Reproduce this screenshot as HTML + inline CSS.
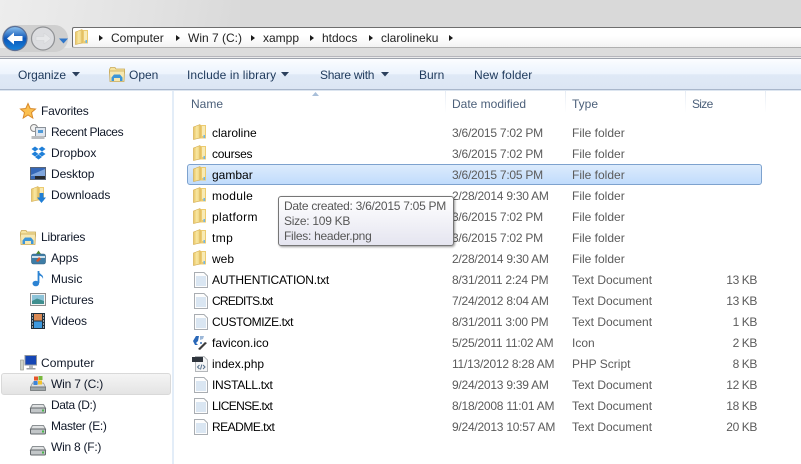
<!DOCTYPE html>
<html><head><meta charset="utf-8"><style>
html,body{margin:0;padding:0}
body{width:801px;height:464px;position:relative;overflow:hidden;background:#fff;font:12px/16px "Liberation Sans",sans-serif;color:#000}
.a{position:absolute}
.t{position:absolute;white-space:nowrap;height:16px}
.s{color:#101828}
.g{color:#5b5b5b}
.d{letter-spacing:-.24px}
.h{color:#4c607a}
.b{color:#1e395b}
.r{text-align:right;width:60px;left:697px;letter-spacing:-.4px}
.tt{color:#575757;letter-spacing:-.27px}
svg{position:absolute;overflow:visible}
</style></head><body>
<svg width="0" height="0" style="left:0;top:0">
<defs>
<linearGradient id="fg" x1="0" x2="1" y1="0" y2="0"><stop offset="0" stop-color="#e9c462"/><stop offset=".5" stop-color="#f8e7a2"/><stop offset="1" stop-color="#edcf78"/></linearGradient>
<linearGradient id="bl" x1="0" x2="0" y1="0" y2="1"><stop offset="0" stop-color="#8fc4f0"/><stop offset=".5" stop-color="#0d56b8"/><stop offset="1" stop-color="#1583dc"/></linearGradient>
<symbol id="folder" viewBox="0 0 14 16" overflow="visible">
<path d="M6 1H13V14.500H6Z" fill="#eccb70"/>
<path d="M9 2H12V12H9Z" fill="#f8eab4"/>
<path d="M.5 3 7 .5V14L.5 15.500Z" fill="url(#fg)" stroke="#d0a747" stroke-width=".6"/>
<rect x="10.500" y="11" width="1.500" height="3" fill="#6fb7e8"/>
</symbol>
<symbol id="doc" viewBox="0 0 14 16" overflow="visible">
<path d="M.5.5H10L13.500 4V15.500H.5Z" fill="#fdfdfd" stroke="#a9adb2"/>
<path d="M2 5H12M2 7H12M2 9H12M2 11H12M2 13H12" stroke="#b8cfe6"/>
</symbol>
<symbol id="drive" viewBox="0 0 16 12" overflow="visible">
<path d="M2.500 2.500H13.500L15.500 6H.500Z" fill="#dfe1e2" stroke="#8c9194"/>
<rect x=".5" y="6" width="15" height="5" rx="1" fill="#c2c6c8" stroke="#63686b"/>
<rect x="12" y="7.500" width="2" height="2" fill="#47b648"/>
</symbol>
<symbol id="libf" viewBox="0 0 16 15" overflow="visible">
<path d="M.5 2.500 1.500 .5H6L7 2H15.500V6H.5Z" fill="#f5e3a0" stroke="#c9a956" stroke-width=".8"/>
<path d="M.5 4H15.500L15 14.500H1Z" fill="#f6e8b2" stroke="#c9a956" stroke-width=".8"/>
<path d="M2.500 14V10.500L5 7.500H11L13.500 10.500V14H11V11H5V14Z" fill="#3d96d8"/>
</symbol>
</defs>
</svg>

<!-- top chrome -->
<div class="a" style="left:0;top:0;width:801px;height:58px;background:#d9d9d9"></div>
<div class="a" style="left:0;top:0;width:240px;height:56px;background:linear-gradient(100deg,#ededed 0,#e2e2e2 60%,#d9d9d9 100%)"></div>
<div class="a" style="left:0;top:48px;width:801px;height:8px;background:#dcdcdc"></div>
<div class="a" style="left:0;top:56px;width:801px;height:1px;background:#b5b5bb"></div>
<div class="a" style="left:0;top:57px;width:801px;height:1px;background:#ebebec"></div>
<div class="a" style="left:0;top:58px;width:801px;height:1px;background:#9da3ad"></div>

<!-- nav buttons -->
<div class="a" style="left:2px;top:25px;width:66px;height:27px;border-radius:14px;background:#cfcfcf"></div>
<svg style="left:0;top:24px" width="70" height="30" viewBox="0 0 70 30">
<circle cx="15" cy="14.500" r="12" fill="url(#bl)" stroke="#5a6f96" stroke-width="1.200"/>
<path d="M7 14.500 14 8.500V12H22.500V17H14V20.500Z" fill="#fff"/>
<circle cx="43" cy="14.500" r="11.500" fill="#dcdde0" stroke="#8f9194" stroke-width="1.200"/>
<path d="M51 14.500 44 9V12.500H36V16.500H44V20Z" fill="#e6e7e9" stroke="#d0d1d4" stroke-width=".5"/>
<path d="M59 14.500H68L63.500 19.500Z" fill="#2f76c9"/>
</svg>

<!-- address bar -->
<div class="a" style="left:72px;top:27px;width:729px;height:21px;box-sizing:border-box;border:1px solid #6e6e6e;border-right:0;border-bottom-color:#b0b0b0;background:linear-gradient(#fff 0,#fff 40%,#f3f3f3 100%);border-radius:2px 0 0 2px"></div>
<svg style="left:75px;top:29px" width="14" height="16"><use href="#folder" width="14" height="16"/></svg>
<svg style="left:0;top:0" width="801" height="60">
<g fill="#1a1a1a">
<path d="M99 35v6l4-3z"/><path d="M176 35v6l4-3z"/><path d="M251 35v6l4-3z"/><path d="M310 35v6l4-3z"/><path d="M369 35v6l4-3z"/><path d="M449 35v6l4-3z"/>
</g></svg>
<div class="t" style="left:111px;top:30px;color:#222">Computer</div>
<div class="t" style="left:188px;top:30px;color:#222">Win 7 (C:)</div>
<div class="t" style="left:263px;top:30px;color:#222">xampp</div>
<div class="t" style="left:322px;top:30px;color:#222">htdocs</div>
<div class="t" style="left:381px;top:30px;color:#222">clarolineku</div>

<!-- toolbar -->
<div class="a" style="left:0;top:59px;width:801px;height:30px;background:linear-gradient(#fcfdff 0,#f3f8fe 24%,#edf4fd 50%,#dfe9f6 52%,#dce6f4 100%)"></div>
<div class="a" style="left:0;top:89px;width:801px;height:1px;background:#a9b7cb"></div>
<div class="a" style="left:0;top:90px;width:801px;height:1px;background:#dce5f0"></div>
<div class="t b" style="left:18px;top:67px;letter-spacing:-.1px">Organize</div>
<svg style="left:72px;top:72px" width="9" height="5"><path d="M0 0H8L4 4.500Z" fill="#2a3f5c"/></svg>
<svg style="left:109px;top:67px" width="16" height="15"><use href="#libf" width="16" height="15"/></svg>
<div class="t b" style="left:129px;top:67px">Open</div>
<div class="t b" style="left:187px;top:67px;letter-spacing:.1px">Include in library</div>
<svg style="left:281px;top:72px" width="9" height="5"><path d="M0 0H8L4 4.500Z" fill="#2a3f5c"/></svg>
<div class="t b" style="left:320px;top:67px;letter-spacing:-.25px">Share with</div>
<svg style="left:381px;top:72px" width="9" height="5"><path d="M0 0H8L4 4.500Z" fill="#2a3f5c"/></svg>
<div class="t b" style="left:419px;top:67px">Burn</div>
<div class="t b" style="left:474px;top:67px;letter-spacing:.1px">New folder</div>

<!-- sidebar divider -->
<div class="a" style="left:172px;top:91px;width:2px;height:373px;background:#e3edf8"></div>

<!-- column header -->
<svg style="left:312px;top:92px" width="8" height="5"><path d="M0 4 3.500 0 7 4Z" fill="#a9bfd9"/></svg>
<div class="a" style="left:445px;top:91px;width:1px;height:22px;background:linear-gradient(#e6ecf4,#fff)"></div>
<div class="a" style="left:565px;top:91px;width:1px;height:22px;background:linear-gradient(#e6ecf4,#fff)"></div>
<div class="a" style="left:685px;top:91px;width:1px;height:22px;background:linear-gradient(#e6ecf4,#fff)"></div>
<div class="a" style="left:765px;top:91px;width:1px;height:22px;background:linear-gradient(#e6ecf4,#fff)"></div>
<div class="t h" style="left:191px;top:96px">Name</div>
<div class="t h" style="left:452px;top:96px">Date modified</div>
<div class="t h" style="left:572px;top:96px">Type</div>
<div class="t h" style="left:692px;top:96px;letter-spacing:-.7px">Size</div>

<!-- sidebar -->
<svg style="left:20px;top:103px" width="16" height="16" viewBox="0 0 16 16"><path d="M8 .5 10.200 5.500 15.500 6 11.500 9.500 12.800 15 8 12 3.200 15 4.500 9.500.5 6 5.800 5.500Z" fill="#fbc050" stroke="#d98a2b"/></svg>
<div class="t s" style="left:41px;top:103px;letter-spacing:-.2px">Favorites</div>
<svg style="left:30px;top:124px" width="16" height="16" viewBox="0 0 16 16"><circle cx="4" cy="4" r="3.500" fill="#f2f2f2" stroke="#888"/><rect x="5.500" y="3.500" width="10" height="9" fill="#dfe6ee" stroke="#8a9199"/><rect x="8" y="6" width="5" height="3" fill="#4f9ad8"/><rect x="1.500" y="12" width="13" height="3" fill="#b9bcbf"/></svg>
<div class="t s" style="left:51px;top:124px;letter-spacing:-.4px">Recent Places</div>
<svg style="left:31px;top:146px" width="15" height="14" viewBox="0 0 15 14"><path d="M4 .5 7.500 3 4 5.500.5 3ZM11 .5 14.500 3 11 5.500 7.500 3ZM4 5.500 7.500 8 4 10.500.5 8ZM11 5.500 14.500 8 11 10.500 7.500 8ZM4 11 7.500 8.500 11 11 7.500 13.500Z" fill="#1f7fd8"/></svg>
<div class="t s" style="left:51px;top:145px">Dropbox</div>
<svg style="left:30px;top:167px" width="16" height="13" viewBox="0 0 16 13"><rect x=".5" y=".5" width="15" height="12" fill="#3568b8" stroke="#5a6577"/><path d="M1 8 15 2V9H1Z" fill="#7fa6de"/><rect x="5" y="9" width="10" height="3" fill="#26292e"/></svg>
<div class="t s" style="left:51px;top:166px;letter-spacing:-.1px">Desktop</div>
<svg style="left:31px;top:186px" width="14" height="16"><use href="#folder" width="14" height="16"/></svg>
<svg style="left:37px;top:193px" width="9" height="10" viewBox="0 0 9 10"><path d="M2.500 0H6.500V4.500H9L4.500 10 0 4.500H2.500Z" fill="#1f7ed6"/></svg>
<div class="t s" style="left:51px;top:187px">Downloads</div>

<svg style="left:20px;top:230px" width="16" height="15"><use href="#libf" width="16" height="15"/></svg>
<div class="t s" style="left:41px;top:229px;letter-spacing:-.2px">Libraries</div>
<svg style="left:31px;top:250px" width="15" height="15" viewBox="0 0 15 15"><path d="M5 4 7.500.5 10 4Z" fill="#4f8a2e"/><rect x=".5" y="4" width="14" height="10" rx="2" fill="#3e7da6" stroke="#355f7c" stroke-width=".6"/><rect x="1" y="6" width="13" height="2" fill="#cfe2ee"/><path d="M5 11 8 7 10 9 7 12Z" fill="#d6562b"/></svg>
<div class="t s" style="left:51px;top:250px">Apps</div>
<svg style="left:32px;top:270px" width="13" height="17" viewBox="0 0 13 17"><path d="M6.500 1V13" stroke="#2c83d3" stroke-width="1.800"/><path d="M6.500 1C8 5 12 4.500 11 9 10.500 6.500 8.500 6 6.500 5Z" fill="#2c83d3"/><ellipse cx="3.800" cy="13.500" rx="3.300" ry="2.800" fill="#2c83d3"/></svg>
<div class="t s" style="left:51px;top:271px">Music</div>
<svg style="left:30px;top:293px" width="16" height="13" viewBox="0 0 16 13"><rect x=".5" y=".5" width="15" height="12" fill="#f3f3f3" stroke="#8d8d8d"/><rect x="2" y="2" width="12" height="9" fill="#8dc3d8"/><path d="M2 8 7 5.500 14 8V11H2Z" fill="#3f8f8f"/></svg>
<div class="t s" style="left:51px;top:292px;letter-spacing:-.1px">Pictures</div>
<svg style="left:31px;top:313px" width="14" height="16" viewBox="0 0 14 16"><rect width="14" height="16" fill="#20303c"/><rect x="3" y="1" width="8" height="6.500" fill="#d98a55"/><rect x="3" y="8.500" width="8" height="6.500" fill="#3d9ae0"/><path d="M1 2H2M1 5H2M1 8H2M1 11H2M1 14H2M12 2H13M12 5H13M12 8H13M12 11H13M12 14H13" stroke="#dfe7ec" stroke-width="1.300"/></svg>
<div class="t s" style="left:51px;top:313px;letter-spacing:-.1px">Videos</div>

<svg style="left:20px;top:355px" width="17" height="16" viewBox="0 0 17 16"><rect x=".5" y="5" width="3" height="10" fill="#cfd3c8" stroke="#8e9388" stroke-width=".6"/><rect x="5" y=".5" width="11.500" height="9.500" fill="#1546b5" stroke="#8e959c"/><rect x="9" y="10" width="4" height="3" fill="#b4b8bc"/><rect x="6.500" y="13" width="9" height="1.500" fill="#9ca1a5"/></svg>
<div class="t s" style="left:41px;top:355px;letter-spacing:.1px">Computer</div>

<div class="a" style="left:1px;top:373px;width:170px;height:22px;box-sizing:border-box;border:1px solid #d9d9d9;border-radius:3px;background:linear-gradient(#f4f4f4,#e4e4e4)"></div>
<svg style="left:30px;top:375px" width="16" height="16" viewBox="0 0 16 16"><path d="M2.500 8H13.500L15.500 12H.5Z" fill="#dfe1e2" stroke="#8c9194" stroke-width=".7"/><rect x=".5" y="12" width="15" height="3.500" fill="#9ea6a9" stroke="#63686b" stroke-width=".7"/><rect x="4" y="1.500" width="4" height="4" fill="#e5552b"/><rect x="8.500" y="1" width="4" height="4" fill="#79b83c"/><rect x="3.500" y="6" width="4" height="4" fill="#3d85d8"/><rect x="8" y="5.500" width="4" height="4" fill="#f3c32a"/></svg>
<div class="t s" style="left:51px;top:376px;letter-spacing:-.2px">Win 7 (C:)</div>
<svg style="left:30px;top:402px" width="16" height="12"><use href="#drive" width="16" height="12"/></svg>
<div class="t s" style="left:51px;top:397px;letter-spacing:-.4px">Data (D:)</div>
<svg style="left:30px;top:423px" width="16" height="12"><use href="#drive" width="16" height="12"/></svg>
<div class="t s" style="left:51px;top:418px;letter-spacing:-.35px">Master (E:)</div>
<svg style="left:30px;top:444px" width="16" height="12"><use href="#drive" width="16" height="12"/></svg>
<div class="t s" style="left:51px;top:439px;letter-spacing:-.25px">Win 8 (F:)</div>

<!-- selection -->
<div class="a" style="left:187px;top:164px;width:575px;height:21px;box-sizing:border-box;border:1px solid #7da2ce;border-radius:3px;background:linear-gradient(#dcebfc,#c1dcfc)"></div>

<!-- folder rows -->
<svg style="left:193px;top:124px" width="14" height="16"><use href="#folder" width="14" height="16"/></svg>
<div class="t" style="left:212px;top:125px">claroline</div>
<div class="t g d" style="left:452px;top:125px">3/6/2015 7:02 PM</div>
<div class="t g" style="left:572px;top:125px">File folder</div>

<svg style="left:193px;top:145px" width="14" height="16"><use href="#folder" width="14" height="16"/></svg>
<div class="t" style="left:212px;top:146px;letter-spacing:-.25px">courses</div>
<div class="t g d" style="left:452px;top:146px">3/6/2015 7:02 PM</div>
<div class="t g" style="left:572px;top:146px">File folder</div>

<svg style="left:193px;top:166px" width="14" height="16"><use href="#folder" width="14" height="16"/></svg>
<div class="t" style="left:212px;top:167px">gambar</div>
<div class="t g d" style="left:452px;top:167px">3/6/2015 7:05 PM</div>
<div class="t g" style="left:572px;top:167px">File folder</div>

<svg style="left:193px;top:187px" width="14" height="16"><use href="#folder" width="14" height="16"/></svg>
<div class="t" style="left:212px;top:188px;letter-spacing:.3px">module</div>
<div class="t g d" style="left:452px;top:188px">2/28/2014 9:30 AM</div>
<div class="t g" style="left:572px;top:188px">File folder</div>

<svg style="left:193px;top:208px" width="14" height="16"><use href="#folder" width="14" height="16"/></svg>
<div class="t" style="left:212px;top:209px;letter-spacing:.3px">platform</div>
<div class="t g d" style="left:452px;top:209px">3/6/2015 7:02 PM</div>
<div class="t g" style="left:572px;top:209px">File folder</div>

<svg style="left:193px;top:229px" width="14" height="16"><use href="#folder" width="14" height="16"/></svg>
<div class="t" style="left:212px;top:230px;letter-spacing:.4px">tmp</div>
<div class="t g d" style="left:452px;top:230px">3/6/2015 7:02 PM</div>
<div class="t g" style="left:572px;top:230px">File folder</div>

<svg style="left:193px;top:250px" width="14" height="16"><use href="#folder" width="14" height="16"/></svg>
<div class="t" style="left:212px;top:251px">web</div>
<div class="t g d" style="left:452px;top:251px">2/28/2014 9:30 AM</div>
<div class="t g" style="left:572px;top:251px">File folder</div>

<!-- file rows -->
<svg style="left:194px;top:272px" width="14" height="16"><use href="#doc" width="14" height="16"/></svg>
<div class="t" style="left:212px;top:272px;letter-spacing:-.19px">AUTHENTICATION.txt</div>
<div class="t g d" style="left:452px;top:272px">8/31/2011 2:24 PM</div>
<div class="t g" style="left:572px;top:272px">Text Document</div>
<div class="t g r" style="top:272px">13 KB</div>

<svg style="left:194px;top:293px" width="14" height="16"><use href="#doc" width="14" height="16"/></svg>
<div class="t" style="left:212px;top:293px;letter-spacing:-.75px">CREDITS.txt</div>
<div class="t g d" style="left:452px;top:293px">7/24/2012 8:04 AM</div>
<div class="t g" style="left:572px;top:293px">Text Document</div>
<div class="t g r" style="top:293px">13 KB</div>

<svg style="left:194px;top:314px" width="14" height="16"><use href="#doc" width="14" height="16"/></svg>
<div class="t" style="left:212px;top:314px;letter-spacing:-.42px">CUSTOMIZE.txt</div>
<div class="t g d" style="left:452px;top:314px">8/31/2011 3:00 PM</div>
<div class="t g" style="left:572px;top:314px">Text Document</div>
<div class="t g r" style="top:314px">1 KB</div>

<svg style="left:192px;top:335px" width="16" height="15" viewBox="0 0 16 15"><path d="M1 6 4 1 7 1 6 6 4 8 6 10 3 10Z" fill="#2a68b8"/><path d="M8 1H12L11 4 8 5Z" fill="#9db8d8"/><path d="M8 7H10L10 9 8 9Z" fill="#6f95c5"/><path d="M6 14 13 7 15 8 8 15Z" fill="#3c3c3c"/></svg>
<div class="t" style="left:212px;top:335px">favicon.ico</div>
<div class="t g d" style="left:452px;top:335px">5/25/2011 11:02 AM</div>
<div class="t g" style="left:572px;top:335px">Icon</div>
<div class="t g r" style="top:335px">2 KB</div>

<svg style="left:192px;top:356px" width="16" height="16" viewBox="0 0 16 16"><path d="M3.500.5H12L15.500 4V15.500H3.500Z" fill="#f4f5f6" stroke="#b4b7ba"/><rect y="1" width="11" height="5" fill="#2f353d"/><path d="M7.500 9 5.500 11 7.500 13M11 9 13 11 11 13M9.800 8.500 8.500 13.500" fill="none" stroke="#56708c"/></svg>
<div class="t" style="left:212px;top:356px">index.php</div>
<div class="t g d" style="left:452px;top:356px">11/13/2012 8:28 AM</div>
<div class="t g" style="left:572px;top:356px">PHP Script</div>
<div class="t g r" style="top:356px">8 KB</div>

<svg style="left:194px;top:377px" width="14" height="16"><use href="#doc" width="14" height="16"/></svg>
<div class="t" style="left:212px;top:377px;letter-spacing:-.3px">INSTALL.txt</div>
<div class="t g d" style="left:452px;top:377px">9/24/2013 9:39 AM</div>
<div class="t g" style="left:572px;top:377px">Text Document</div>
<div class="t g r" style="top:377px">12 KB</div>

<svg style="left:194px;top:398px" width="14" height="16"><use href="#doc" width="14" height="16"/></svg>
<div class="t" style="left:212px;top:398px;letter-spacing:-.65px">LICENSE.txt</div>
<div class="t g d" style="left:452px;top:398px">8/18/2008 11:01 AM</div>
<div class="t g" style="left:572px;top:398px">Text Document</div>
<div class="t g r" style="top:398px">18 KB</div>

<svg style="left:194px;top:419px" width="14" height="16"><use href="#doc" width="14" height="16"/></svg>
<div class="t" style="left:212px;top:419px;letter-spacing:-.5px">README.txt</div>
<div class="t g d" style="left:452px;top:419px">9/24/2013 10:57 AM</div>
<div class="t g" style="left:572px;top:419px">Text Document</div>
<div class="t g r" style="top:419px">20 KB</div>

<!-- tooltip -->
<div class="a" style="left:278px;top:196px;width:176px;height:50px;box-sizing:border-box;border:1px solid #767676;border-radius:3px;background:linear-gradient(#fff,#e5e5f0);box-shadow:1px 1px 2px rgba(0,0,0,.4)"></div>
<div class="t tt" style="left:284px;top:198px">Date created: 3/6/2015 7:05 PM</div>
<div class="t tt" style="left:284px;top:213px">Size: 109 KB</div>
<div class="t tt" style="left:284px;top:228px">Files: header.png</div>
</body></html>
